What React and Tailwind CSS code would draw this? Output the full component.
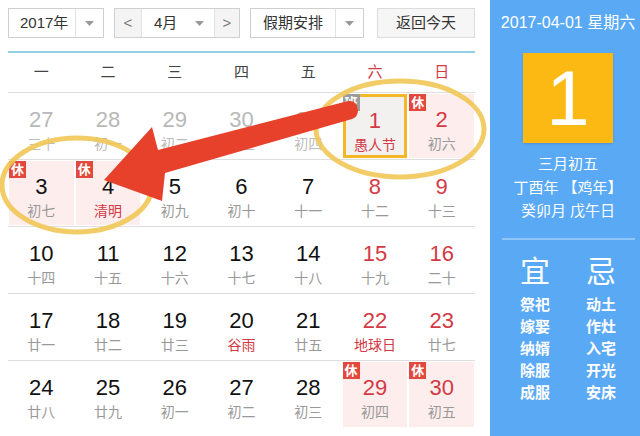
import React from "react";

const FONT = { fontFamily: '"Liberation Sans", "Noto Sans CJK SC", sans-serif' };

const rows = [
  [
    { d: 27, l: "三十", prev: true },
    { d: 28, l: "初一", prev: true },
    { d: 29, l: "初二", prev: true },
    { d: 30, l: "初三", prev: true },
    { d: 31, l: "初四", prev: true },
    { d: 1, l: "愚人节", red: true, lred: true, badge: "班", today: true },
    { d: 2, l: "初六", red: true, badge: "休" },
  ],
  [
    { d: 3, l: "初七", badge: "休" },
    { d: 4, l: "清明", lred: true, badge: "休" },
    { d: 5, l: "初九" },
    { d: 6, l: "初十" },
    { d: 7, l: "十一" },
    { d: 8, l: "十二", red: true },
    { d: 9, l: "十三", red: true },
  ],
  [
    { d: 10, l: "十四" },
    { d: 11, l: "十五" },
    { d: 12, l: "十六" },
    { d: 13, l: "十七" },
    { d: 14, l: "十八" },
    { d: 15, l: "十九", red: true },
    { d: 16, l: "二十", red: true },
  ],
  [
    { d: 17, l: "廿一" },
    { d: 18, l: "廿二" },
    { d: 19, l: "廿三" },
    { d: 20, l: "谷雨", lred: true },
    { d: 21, l: "廿五" },
    { d: 22, l: "地球日", red: true, lred: true },
    { d: 23, l: "廿七", red: true },
  ],
  [
    { d: 24, l: "廿八" },
    { d: 25, l: "廿九" },
    { d: 26, l: "初一" },
    { d: 27, l: "初二" },
    { d: 28, l: "初三" },
    { d: 29, l: "初四", red: true, badge: "休" },
    { d: 30, l: "初五", red: true, badge: "休" },
  ],
];

function Caret() {
  return (
    <svg width="9" height="5" viewBox="0 0 9 5">
      <path d="M0 0 L9 0 L4.5 5 Z" fill="#9a9a9a" />
    </svg>
  );
}

function Cell({ c }) {
  const holiday = c.badge === "休";
  const numColor = c.prev ? "text-[#b8b8b8]" : c.red ? "text-[#d33a45]" : "text-[#111]";
  const lunColor = c.prev ? "text-[#bdbdbd]" : c.lred ? "text-[#d33a45]" : "text-[#999]";
  let bg = "";
  if (holiday) bg = "bg-[#fdeded]";
  if (c.today) bg = "bg-[#f3f1f0] border-[3px] border-[#f4b728]";
  return (
    <div className="relative h-full p-[1px]">
      <div className={`relative h-full flex flex-col items-center ${bg}`}>
        <div className={`${c.today ? "mt-[11px]" : "mt-[13px]"} text-[22px] leading-[25px] ${numColor}`}>{c.d}</div>
        <div className={`mt-[3px] text-[14px] leading-[18px] ${lunColor}`}>{c.l}</div>
        {c.badge && (
          <div
            className={`absolute ${c.today ? "-left-[3px] -top-[3px]" : "left-0 top-0"} w-[17px] h-[17px] flex items-center justify-center text-[13px] leading-none text-white font-bold ${
              holiday ? "bg-[#e2483b]" : "bg-[#9c9c9c]"
            }`}
          >
            {c.badge}
          </div>
        )}
      </div>
    </div>
  );
}

export default function App() {
  const weekdays = ["一", "二", "三", "四", "五", "六", "日"];
  return (
    <div className="relative w-[640px] h-[436px] overflow-hidden bg-white flex" style={FONT}>
      {/* left */}
      <div className="w-[490px] pl-[8px] pt-[8px]">
        <div className="w-[467px]">
          <div className="flex h-[30px] text-[15px] text-[#333]">
            <div className="w-[96px] h-full border border-[#cfcfcf] flex">
              <div className="w-[67px] flex items-center pl-[11px] border-r border-[#e2e2e2]">2017年</div>
              <div className="flex-1 flex items-center justify-center"><Caret /></div>
            </div>
            <div className="ml-[10px] w-[126px] h-full border border-[#cfcfcf] flex">
              <div className="w-[27px] flex items-center justify-center bg-[#f4f4f4] border-r border-[#e2e2e2] text-[#777]">&lt;</div>
              <div className="w-[72px] flex items-center justify-between pl-[12px] pr-[10px]">
                <span>4月</span>
                <Caret />
              </div>
              <div className="flex-1 flex items-center justify-center bg-[#f4f4f4] border-l border-[#e2e2e2] text-[#777]">&gt;</div>
            </div>
            <div className="ml-[10px] w-[114px] h-full border border-[#cfcfcf] flex">
              <div className="w-[85px] flex items-center pl-[12px] border-r border-[#e2e2e2]">假期安排</div>
              <div className="flex-1 flex items-center justify-center"><Caret /></div>
            </div>
            <div className="ml-[13px] flex-1 h-full border border-[#dcdcdc] bg-[#f6f6f6] flex items-center justify-center">返回今天</div>
          </div>
          <div className="mt-[13px] h-[2px] bg-[#93d0e6]" />
          <div className="grid grid-cols-7 h-[39px] items-center text-[15px] text-[#444]">
            {weekdays.map((w, i) => (
              <div key={w} className={`text-center ${i >= 5 ? "text-[#d33a45]" : ""}`}>{w}</div>
            ))}
          </div>
          <div className="border-t border-[#dedede]">
            {rows.map((r, ri) => (
              <div key={ri} className={`grid grid-cols-7 h-[67px] ${ri < 4 ? "border-b border-[#dedede]" : ""}`}>
                {r.map((c, ci) => (
                  <Cell key={ci} c={c} />
                ))}
              </div>
            ))}
          </div>
        </div>
      </div>

      {/* right panel */}
      <div className="flex-1 bg-[#5aa9f5] text-white flex flex-col items-center pl-[6px]" style={FONT}>
        <div className="mt-[13px] text-[16px] leading-[20px]">2017-04-01 星期六</div>
        <div className="mt-[20px] w-[90px] h-[90px] bg-[#fdb913] flex items-center justify-center text-[78px] leading-none shadow-sm">1</div>
        <div className="mt-[9px] text-[15px] leading-[23.5px] text-center">
          <div>三月初五</div>
          <div>丁酉年 【鸡年】</div>
          <div>癸卯月 戊午日</div>
        </div>
        <div className="mt-[15px] w-[133px] h-[2px] bg-[#8fc5f8]" />
        <div className="mt-[14px] flex gap-[34px]">
          {[
            ["宜", ["祭祀", "嫁娶", "纳婿", "除服", "成服"]],
            ["忌", ["动土", "作灶", "入宅", "开光", "安床"]],
          ].map(([h, items]) => (
            <div key={h} className="flex flex-col items-center w-[32px]">
              <div className="text-[30px] leading-[36px]">{h}</div>
              <div className="mt-[4px] text-[15px] leading-[22px] font-bold">
                {items.map((t) => (
                  <div key={t}>{t}</div>
                ))}
              </div>
            </div>
          ))}
        </div>
      </div>

      {/* annotation overlay */}
      <svg className="absolute left-0 top-0 pointer-events-none" width="640" height="436" viewBox="0 0 640 436">
        <ellipse cx="77" cy="185" rx="75" ry="47" fill="none" stroke="#f1c655" strokeOpacity="0.9" strokeWidth="5" />
        <ellipse cx="400" cy="129" rx="84" ry="48" fill="none" stroke="#f1c655" strokeOpacity="0.9" strokeWidth="5" />
        <path
          d="M104 180 L152 127 L158 150 L348 101 Q357 100 358 110 Q358 117 352 119 L165 173 L162 201 Z"
          fill="#e8412b"
        />
      </svg>
    </div>
  );
}
